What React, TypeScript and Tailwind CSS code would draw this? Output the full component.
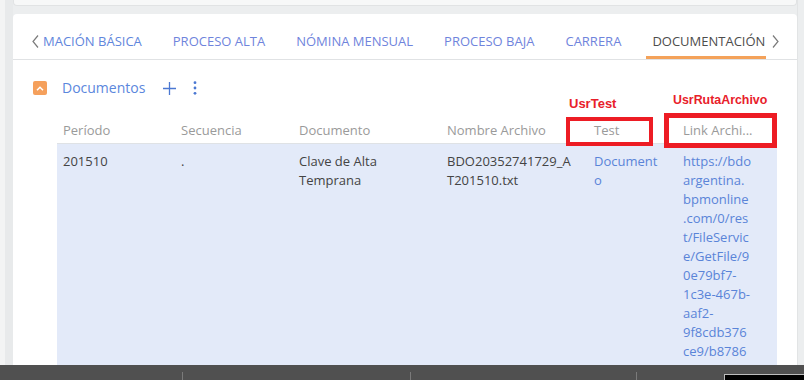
import React from 'react';

const tabs = ['PROCESO ALTA', 'NÓMINA MENSUAL', 'PROCESO BAJA', 'CARRERA'];

const linkLines = [
  'https://bdo',
  'argentina.',
  'bpmonline',
  '.com/0/res',
  't/FileServic',
  'e/GetFile/9',
  '0e79bf7-',
  '1c3e-467b-',
  'aaf2-',
  '9f8cdb376',
  'ce9/b8786',
  'a4f0-',
];

const Chevron = ({ dir }: { dir: 'left' | 'right' }) => (
  <svg width="7" height="13" viewBox="0 0 7 13" className="shrink-0">
    <polyline
      points={dir === 'left' ? '6,0.5 1,6.5 6,12.5' : '1,0.5 6,6.5 1,12.5'}
      fill="none"
      stroke="#7b7b7b"
      strokeWidth="1.2"
    />
  </svg>
);

export default function App() {
  return (
    <div className="h-[380px] w-[804px] flex flex-col overflow-hidden bg-[#eceeef] font-['Open_Sans',sans-serif]">
      <div className="flex-1 flex min-h-0">
        <div className="w-[5px] shrink-0 bg-[#f3f4f4]" />
        <div className="w-[8px] shrink-0 bg-[#e8eaeb]" />

        <div className="flex-1 min-w-0 flex flex-col gap-[8px] min-h-0">
          {/* previous card, only its bottom edge shows */}
          <div className="h-[6px] shrink-0 bg-[#f7f8f8] border border-t-0 border-[#e1e3e4] rounded-b-[4px]" />

          <div className="flex-1 min-h-0 bg-white rounded-t-[4px] relative overflow-hidden">
            {/* tabs */}
            <div className="h-[46px] flex items-end border-b border-[#e0e2e4] pl-[19px] pr-[18px]">
              <div className="self-stretch flex items-center pt-[9px]">
                <Chevron dir="left" />
              </div>
              <div className="flex-1 min-w-0 flex gap-[19px] overflow-hidden ml-[4px] text-[13px] leading-[18px] whitespace-nowrap">
                <div className="pr-[6px] pt-[18px] pb-[6px] border-b-[3px] border-transparent text-[#5f86dc]">
                  MACIÓN BÁSICA
                </div>
                {tabs.map((t) => (
                  <div
                    key={t}
                    className="px-[6px] pt-[18px] pb-[6px] border-b-[3px] border-transparent text-[#6f84dc]"
                  >
                    {t}
                  </div>
                ))}
                <div className="px-[6px] pt-[18px] pb-[6px] border-b-[3px] border-[#f4a25a] text-[#4d4d4d]">
                  DOCUMENTACIÓN
                </div>
              </div>
              <div className="self-stretch flex items-center pt-[9px] ml-[6px]">
                <Chevron dir="right" />
              </div>
            </div>

            {/* detail header */}
            <div className="mt-[21px] h-[14px] flex items-center pl-[20px]">
              <div className="w-[14px] h-[14px] rounded-[2px] bg-[#f5a05c] flex items-center justify-center">
                <svg width="8" height="5" viewBox="0 0 8 5">
                  <polyline points="1,4.2 4,1.2 7,4.2" fill="none" stroke="#fff" strokeWidth="1.5" />
                </svg>
              </div>
              <span className="ml-[15px] text-[14px] leading-none text-[#5b87dd]">Documentos</span>
              <svg width="13" height="13" viewBox="0 0 13 13" className="ml-[18px]">
                <path d="M6.5 0v13M0 6.5h13" stroke="#4b78d2" strokeWidth="1.3" />
              </svg>
              <svg width="4" height="14" viewBox="0 0 4 14" className="ml-[17px]">
                <circle cx="2" cy="1.7" r="1.4" fill="#4b78d2" />
                <circle cx="2" cy="7" r="1.4" fill="#4b78d2" />
                <circle cx="2" cy="12.3" r="1.4" fill="#4b78d2" />
              </svg>
            </div>

            {/* grid */}
            <div className="mt-[22px] ml-[44px] w-[720px] text-[13px]">
              <div className="h-[27px] flex items-center border-b border-[#dfe2e5] text-[#9a9a9a] leading-[18px]">
                <div className="w-[118px] pl-[6px]">Período</div>
                <div className="w-[118px] pl-[6px]">Secuencia</div>
                <div className="w-[148px] pl-[6px]">Documento</div>
                <div className="w-[147px] pl-[6px]">Nombre Archivo</div>
                <div className="w-[89px] pl-[6px]">Test</div>
                <div className="w-[100px] pl-[6px]">Link Archi...</div>
              </div>
              <div className="flex bg-[#e3eaf9] pt-[8px] leading-[19px] text-[#444] min-h-[260px]">
                <div className="w-[118px] pl-[6px]">201510</div>
                <div className="w-[118px] pl-[6px]">.</div>
                <div className="w-[148px] pl-[6px] pr-[20px]">Clave de Alta Temprana</div>
                <div className="w-[147px] pl-[6px] pr-[14px] break-all">BDO20352741729_AT201510.txt</div>
                <div className="w-[89px] pl-[6px] pr-[18px] break-all text-[#5a84d8]">Documento</div>
                <div className="w-[100px] pl-[6px] text-[#5a84d8]">
                  {linkLines.map((l) => (
                    <div key={l}>{l}</div>
                  ))}
                </div>
              </div>
            </div>

            {/* red annotations */}
            <span className="absolute left-[556px] top-[83px] text-[13px] leading-none font-bold text-[#e8202a] font-['Liberation_Sans',Arial,sans-serif]">
              UsrTest
            </span>
            <span className="absolute left-[660px] top-[80px] text-[12.4px] leading-none font-bold text-[#e8202a] font-['Liberation_Sans',Arial,sans-serif]">
              UsrRutaArchivo
            </span>
            <div className="absolute left-[553px] top-[103px] w-[87px] h-[29px] border-4 border-[#ed1c24]" />
            <div className="absolute left-[651px] top-[99px] w-[113px] h-[35px] border-[5px] border-[#ed1c24]" />
          </div>
        </div>

        <div className="w-[7px] shrink-0 border-l border-[#e2e4e5]" />
      </div>

      {/* taskbar */}
      <div className="h-[15px] shrink-0 flex bg-[#505050]">
        <div className="w-[182px]" />
        <div className="w-px mt-[7px] bg-[#7a7a7a]" />
        <div className="w-[227px]" />
        <div className="w-px mt-[7px] bg-[#7a7a7a]" />
        <div className="w-[225px]" />
        <div className="w-px mt-[7px] bg-[#7a7a7a]" />
        <div className="w-[87px]" />
        <div className="flex-1 mt-[9px] bg-black border-t border-l border-[#bdbdbd]" />
      </div>
    </div>
  );
}
